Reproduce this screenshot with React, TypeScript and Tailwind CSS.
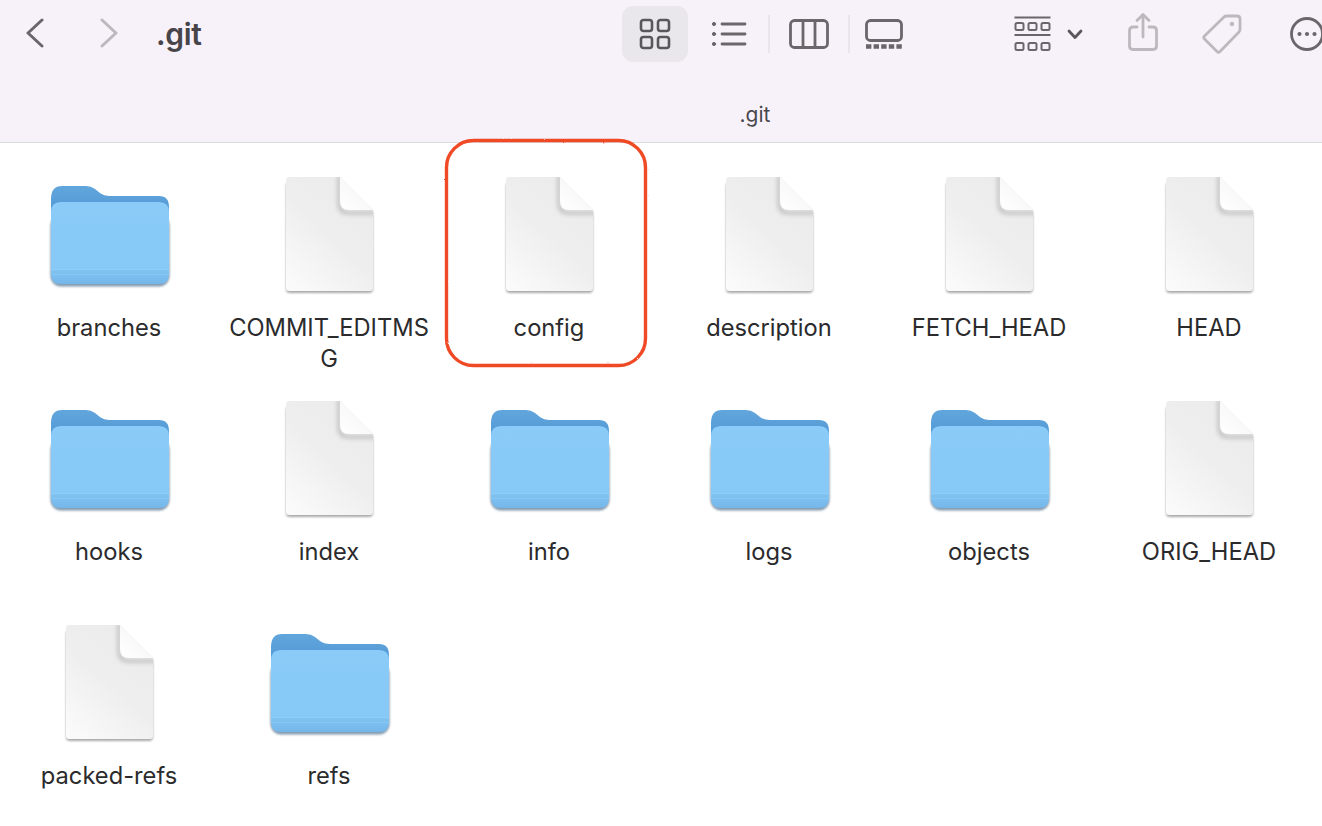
import React, { useId } from "react";

function Folder() {
  const id = useId();
  return (
    <svg width="128" height="110" viewBox="-4 -2 128 110" className="block">
      <defs>
        <linearGradient id={id + "b"} x1="0" y1="0" x2="0" y2="1">
          <stop offset="0" stopColor="#62a6dd" />
          <stop offset="1" stopColor="#3f87c8" />
        </linearGradient>
        <linearGradient id={id + "f"} x1="0" y1="0" x2="0" y2="1">
          <stop offset="0" stopColor="#8acbf8" />
          <stop offset="0.82" stopColor="#86c8f6" />
          <stop offset="0.83" stopColor="#80c3f2" />
          <stop offset="1" stopColor="#75b7ea" />
        </linearGradient>
        <filter id={id + "sh"} x="-10%" y="-10%" width="120%" height="125%">
          <feGaussianBlur stdDeviation="1.3" />
        </filter>
      </defs>
      <rect x="0.5" y="30" width="119" height="71.5" rx="10" fill="#35597a" opacity="0.6" filter={`url(#${id}sh)`} />
      <path
        d="M1 14 Q1 1 12 1 H36 Q41 1 45 4 L50 8 Q54 11 60 11 H109 Q119 11 119 22 V60 H1 Z"
        fill={`url(#${id}b)`}
      />
      <path
        d="M11 17 H109 Q119 17 119 27 V89 Q119 99 109 99 H11 Q1 99 1 89 V27 Q1 17 11 17 Z"
        fill={`url(#${id}f)`}
      />
      <rect x="1" y="84" width="118" height="1" fill="#9ad3f8" opacity="0.55" />
      <rect x="1" y="89" width="118" height="1" fill="#9ad3f8" opacity="0.4" />
    </svg>
  );
}

function FileDoc() {
  const id = useId();
  return (
    <svg width="96" height="124" viewBox="-4 -3 96 124" className="block">
      <defs>
        <linearGradient id={id + "p"} x1="0.85" y1="0" x2="0.15" y2="1">
          <stop offset="0" stopColor="#ebebeb" />
          <stop offset="0.5" stopColor="#eeeeee" />
          <stop offset="1" stopColor="#fafafa" />
        </linearGradient>
        <linearGradient id={id + "c"} x1="0" y1="1" x2="1" y2="0">
          <stop offset="0" stopColor="#ffffff" />
          <stop offset="0.62" stopColor="#f7f7f7" />
          <stop offset="1" stopColor="#e2e2e2" />
        </linearGradient>
        <filter id={id + "sb"} x="-20%" y="-20%" width="140%" height="140%">
          <feGaussianBlur stdDeviation="1" />
        </filter>
        <filter id={id + "fb"} x="-40%" y="-40%" width="180%" height="180%">
          <feGaussianBlur stdDeviation="2" />
        </filter>
        <clipPath id={id + "cl"}>
          <path d="M3 0 H54 L87 33 V111 Q87 114 84 114 H3 Q0 114 0 111 V3 Q0 0 3 0 Z" />
        </clipPath>
      </defs>
      <path d="M3 4 H54 L87 35 V112 Q87 116 83 116 H4 Q0 116 0 112 V8 Z" fill="#8d8d8d" opacity="0.75" filter={`url(#${id}sb)`} />
      <path
        d="M3 0 H54 L87 33 V111 Q87 114 84 114 H3 Q0 114 0 111 V3 Q0 0 3 0 Z"
        fill={`url(#${id}p)`}
      />
      <g clipPath={`url(#${id}cl)`}>
        <path d="M53 -2 V26 Q53 36 63 36 H90" fill="none" stroke="#000" strokeOpacity="0.22" strokeWidth="3" filter={`url(#${id}fb)`} />
      </g>
      <path d="M54 0 L87 33 H63 Q54 33 54 24 Z" fill={`url(#${id}c)`} />
    </svg>
  );
}

const items: [string, "d" | "f"][] = [
  ["branches", "d"],
  ["COMMIT_EDITMSG", "f"],
  ["config", "f"],
  ["description", "f"],
  ["FETCH_HEAD", "f"],
  ["HEAD", "f"],
  ["hooks", "d"],
  ["index", "f"],
  ["info", "d"],
  ["logs", "d"],
  ["objects", "d"],
  ["ORIG_HEAD", "f"],
  ["packed-refs", "f"],
  ["refs", "d"],
];

const c = "#6a666c";
const faded = "#bcb9be";

export default function App() {
  return (
    <div
      className="relative w-[1322px] h-[826px] overflow-hidden bg-white"
      style={{ fontFamily: "Inter, 'Liberation Sans', sans-serif" }}
    >
      <header className="h-[143px] bg-[#f7f2f9] border-b border-[#dcdadd] flex flex-col">
        <div className="h-[68px] flex items-center">
          <svg width="20" height="30" viewBox="0 0 20 30" fill="none" className="ml-[25px] shrink-0 -translate-y-px">
            <path d="M17 2 L3 15 L17 28" stroke={c} strokeWidth="3" strokeLinecap="round" strokeLinejoin="round" />
          </svg>
          <svg width="20" height="30" viewBox="0 0 20 30" fill="none" className="ml-[54px] shrink-0 -translate-y-px">
            <path d="M3 2 L17 15 L3 28" stroke={faded} strokeWidth="3" strokeLinecap="round" strokeLinejoin="round" />
          </svg>
          <span className="ml-[37px] w-[466px] shrink-0 text-[30px] font-semibold text-[#47444a] tracking-[-0.3px]">.git</span>
          <div className="w-[66px] h-[56px] rounded-[11px] bg-[#eae7ec] flex items-center justify-center shrink-0">
            <svg width="32" height="32" viewBox="0 0 32 32" fill="none" stroke="#5a575c" strokeWidth="2.6">
              <rect x="2" y="2" width="11" height="11" rx="2.5" />
              <rect x="19" y="2" width="11" height="11" rx="2.5" />
              <rect x="2" y="19" width="11" height="11" rx="2.5" />
              <rect x="19" y="19" width="11" height="11" rx="2.5" />
            </svg>
          </div>
          <svg width="36" height="28" viewBox="0 0 36 28" fill="none" className="ml-[23px] shrink-0" stroke={c} strokeWidth="2.8" strokeLinecap="round">
            <path d="M11 4 H34 M11 14 H34 M11 24 H34" />
            <circle cx="3" cy="4" r="1.6" fill={c} strokeWidth="1" />
            <circle cx="3" cy="14" r="1.6" fill={c} strokeWidth="1" />
            <circle cx="3" cy="24" r="1.6" fill={c} strokeWidth="1" />
          </svg>
          <div className="ml-[21px] w-[2px] h-[38px] bg-[#e9e6eb] shrink-0" />
          <svg width="40" height="30" viewBox="0 0 40 30" fill="none" className="ml-[19px] shrink-0" stroke={c} strokeWidth="2.8">
            <rect x="1.5" y="1.5" width="37" height="27" rx="4" />
            <path d="M14 1.5 V28.5 M26 1.5 V28.5" />
          </svg>
          <div className="ml-[19px] w-[2px] h-[38px] bg-[#e9e6eb] shrink-0" />
          <svg width="38" height="30" viewBox="0 0 38 30" fill="none" className="ml-[15px] shrink-0">
            <rect x="1.5" y="1.5" width="35" height="20" rx="4" stroke={c} strokeWidth="2.8" />
            <path d="M1 27.5 H37" stroke={c} strokeWidth="4.5" strokeDasharray="5.4 2.2" />
          </svg>
          <svg width="37" height="36" viewBox="0 0 37 36" fill="none" className="ml-[111px] shrink-0" stroke={c}>
            <path d="M0.5 1.5 H36.5 M0.5 19 H36.5" strokeWidth="2.2" />
            <g strokeWidth="2">
              <rect x="1.5" y="7" width="8" height="7" rx="1.5" />
              <rect x="14.5" y="7" width="8" height="7" rx="1.5" />
              <rect x="27.5" y="7" width="8" height="7" rx="1.5" />
              <rect x="1.5" y="27" width="8" height="7" rx="1.5" />
              <rect x="14.5" y="27" width="8" height="7" rx="1.5" />
              <rect x="27.5" y="27" width="8" height="7" rx="1.5" />
            </g>
          </svg>
          <svg width="16" height="11" viewBox="0 0 16 11" fill="none" className="ml-[16px] shrink-0">
            <path d="M2 2 L8 8.5 L14 2" stroke="#5a575c" strokeWidth="2.8" strokeLinecap="round" strokeLinejoin="round" />
          </svg>
          <svg width="30" height="38" viewBox="0 0 30 38" fill="none" className="ml-[45px] shrink-0 -translate-y-[2px]" stroke={faded} strokeWidth="2.8" strokeLinecap="round" strokeLinejoin="round">
            <path d="M9 14 H5 Q1.5 14 1.5 17.5 V33 Q1.5 36.5 5 36.5 H25 Q28.5 36.5 28.5 33 V17.5 Q28.5 14 25 14 H21" />
            <path d="M15 24 V2 M9 7.5 L15 1.5 L21 7.5" />
          </svg>
          <svg width="40" height="40" viewBox="0 0 40 40" fill="none" className="ml-[44px] shrink-0" stroke={faded} strokeWidth="2.8" strokeLinejoin="round">
            <path d="M2.5 22 L22 3 Q23 2 25 2 H35 Q38 2 38 5 V15 Q38 17 37 18 L18 37.5 Q16.5 39 15 37.5 L2.5 25 Q1 23.5 2.5 22 Z" />
            <circle cx="30" cy="10" r="1.8" fill={faded} strokeWidth="1" />
          </svg>
          <svg width="34" height="34" viewBox="0 0 34 34" fill="none" className="ml-[48px] shrink-0">
            <circle cx="17" cy="17" r="15.5" stroke={c} strokeWidth="2.8" />
            <circle cx="9.5" cy="17" r="2.1" fill={c} />
            <circle cx="17" cy="17" r="2.1" fill={c} />
            <circle cx="24.5" cy="17" r="2.1" fill={c} />
          </svg>
        </div>
        <div className="flex-1 flex items-center justify-center pl-[188px] pt-[19px] text-[21px] text-[#4a474c]">.git</div>
      </header>

      <main className="-ml-px grid grid-cols-[repeat(6,220px)] auto-rows-[224px] pt-[32px]">
        {items.map(([name, kind]) => (
          <div key={name} className="flex flex-col items-center">
            <div className="h-[123px] flex items-end justify-center">
              {kind === "d" ? (
                <div className="translate-x-px mb-[5px]"><Folder /></div>
              ) : (
                <div className="translate-x-px"><FileDoc /></div>
              )}
            </div>
            <div className="mt-[14px] w-[208px] text-center text-[23.7px] leading-[31px] text-[#2b2b2d] break-all">{name}</div>
          </div>
        ))}
      </main>

      <svg width="214" height="239" viewBox="0 0 214 239" fill="none" className="absolute left-[439px] top-[133px]">
        <defs>
          <filter id="rough" x="-5%" y="-5%" width="110%" height="110%">
            <feTurbulence type="fractalNoise" baseFrequency="0.25" numOctaves="2" seed="4" />
            <feDisplacementMap in="SourceGraphic" scale="1.6" />
          </filter>
        </defs>
        <rect x="7.5" y="7.5" width="199" height="225" rx="27" stroke="#f04a25" strokeWidth="3.4" filter="url(#rough)" />
      </svg>
    </div>
  );
}
